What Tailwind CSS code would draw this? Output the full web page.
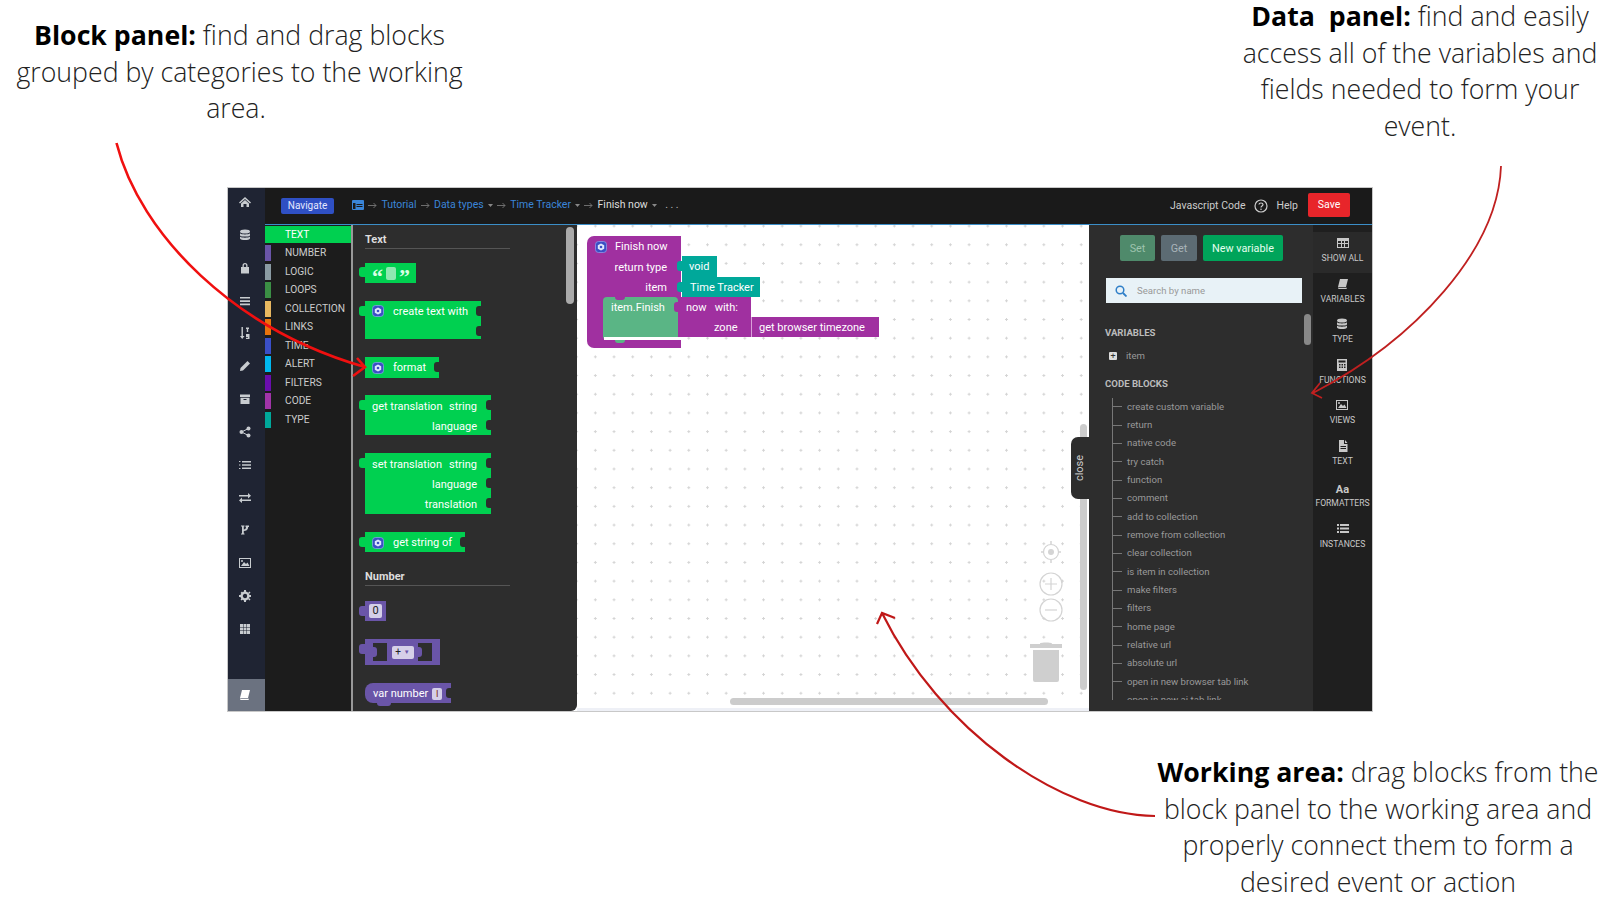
<!DOCTYPE html>
<html lang="en">
<head>
  <meta charset="UTF-8">
  <meta name="viewport" content="width=device-width, initial-scale=1.0">
  <title>Event editor overview</title>
  <script src="https://cdn.jsdelivr.net/npm/@tailwindcss/browser@4"></script>
</head>
<body class="bg-white">
  <svg class="hidden">
    <symbol id="gear" viewBox="0 0 12 12"><rect x=".5" y=".5" width="11" height="11" rx="3" fill="#3b4fc4" stroke="#8fa6f0" stroke-width=".7"/><path d="M6 2.400 9.200 4.200v3.600L6 9.600 2.800 7.800V4.200z" fill="#dfe8ff"/><circle cx="6" cy="6" r="1.300" fill="#3b4fc4"/></symbol>
    <symbol id="db" viewBox="0 0 12 12"><ellipse cx="6" cy="2.400" rx="5" ry="2" fill="currentColor"/><path d="M1 4.200c1 1.600 9 1.600 10 0v2.200c-1 1.600-9 1.600-10 0zM1 7.600c1 1.600 9 1.600 10 0v2c-1 2-9 2-10 0z" fill="currentColor"/></symbol>
    <symbol id="grid" viewBox="0 0 12 12"><path d="M0 1h12v10H0zM1 4v2h3V4zm4 0v2h2V4zm3 0v2h3V4zM1 7v3h3V7zm4 0v3h2V7zm3 0v3h3V7z" fill="currentColor" fill-rule="evenodd"/></symbol>
    <symbol id="book" viewBox="0 0 12 12"><path d="M3 1h8l-2 8H1zM1 9.500c0 1 .5 1.500 1.500 1.500H9.500l.5-1.200H2.500z" fill="currentColor"/></symbol>
    <symbol id="image" viewBox="0 0 12 12"><path d="M0 1h12v10H0zM1 2v8h10V2zm1 7 3-4 2 2 1.500-1.500L10.500 9z" fill="currentColor" fill-rule="evenodd"/><circle cx="3" cy="4" r="1" fill="currentColor"/></symbol>
    <symbol id="calc" viewBox="0 0 12 12"><path d="M1 0h10v12H1zM2.500 1.500v2h7v-2zM3 5v1.500h1.500V5zm2.500 0v1.500H7V5zM8 5v1.500h1.500V5zM3 7.500V9h1.500V7.500zm2.500 0V9H7V7.500zm2.500 0V9h1.500V7.500z" fill="currentColor" fill-rule="evenodd"/></symbol>
    <symbol id="file" viewBox="0 0 12 12"><path d="M2 0h5v4h3.500v8H2zM8 0l2.500 3H8zM3.500 6v1h5.500V6zm0 2v1h5.500V8z" fill="currentColor" fill-rule="evenodd"/></symbol>
    <symbol id="list" viewBox="0 0 12 12"><path d="M0 2h2v2H0zm3 0h9v2H3zM0 5.500h2v2H0zm3 0h9v2H3zM0 9h2v2H0zm3 0h9v2H3z" fill="currentColor"/></symbol>
    <symbol id="arrow" viewBox="0 0 9 7"><path d="M0 3.500h8M5.500 1 8 3.500 5.500 6" fill="none" stroke="#777" stroke-width=".9"/></symbol>
    <symbol id="caret" viewBox="0 0 5 3"><path d="M0 0h5L2.500 3z" fill="#888"/></symbol>
  </svg>

  <div class="relative w-[1600px] h-[900px] overflow-hidden bg-white font-['Open_Sans',sans-serif] font-light text-[26.700px] leading-[36.700px] text-[#222]">
    <div class="flex justify-between h-[188px]">
      <p class="w-[479px] pt-[17px] text-center"><b class="font-bold text-black">Block panel:</b> find and drag blocks<br>grouped by categories to the working<br>area.&nbsp;</p>
      <p class="w-[360px] -mt-[2px] text-center"><b class="font-bold text-black">Data&nbsp; panel:</b> find and easily<br>access all of the variables and<br>fields needed to form your<br>event.</p>
    </div>

    <div class="flex ml-[228px] w-[1144px] h-[523px] shadow-[0_0_0_1px_#c8c8c8] font-['Roboto',sans-serif] font-normal text-[11px] leading-[14px] text-[#ddd]">
      <!-- left rail -->
      <div class="flex flex-col items-center w-[37px] bg-[#1f2433] text-[#c8ccd0]">
        <div class="flex flex-col items-center gap-[20.850px] pt-[8px] pr-[3px]">
          <svg class="w-3 h-3" viewBox="0 0 12 12"><path d="M6 1 0 6.500l1 1L6 3l5 4.500 1-1zM2 7.500 6 4l4 3.500V11H7.500V8h-3v3H2z" fill="currentColor"/></svg>
          <svg class="w-3 h-3"><use href="#db"/></svg>
          <svg class="w-3 h-3" viewBox="0 0 12 12"><path d="M2 5h8v6.500H2zM3.500 5V3.500a2.500 2.500 0 0 1 5 0V5H7.200V3.500a1.200 1.200 0 0 0-2.400 0V5z" fill="currentColor"/></svg>
          <svg class="w-3 h-3" viewBox="0 0 12 12"><path d="M1 2h10v1.600H1zm0 3.300h10v1.600H1zm0 3.300h10v1.600H1z" fill="currentColor"/></svg>
          <svg class="w-3 h-3" viewBox="0 0 12 12"><path d="M2.500 0h1.400v9H5.500L3.200 12 1 9h1.500zM7 .5h3V2h-.8v3H7.800V2H7zM7 7h3.500v5H7v-1.200h2V10H7z" fill="currentColor"/></svg>
          <svg class="w-3 h-3" viewBox="0 0 12 12"><path d="M8.500 1 11 3.500 4 10.500 1 11l.5-3z" fill="currentColor"/></svg>
          <svg class="w-3 h-3" viewBox="0 0 12 12"><path d="M1 1.500h10v2.500H1zM1.500 4.800h9V11h-9zM4.500 6v1h3V6z" fill="currentColor" fill-rule="evenodd"/></svg>
          <svg class="w-3 h-3" viewBox="0 0 12 12"><circle cx="9.500" cy="2.500" r="2" fill="currentColor"/><circle cx="2.500" cy="6" r="2" fill="currentColor"/><circle cx="9.500" cy="9.500" r="2" fill="currentColor"/><path d="M9.500 2.500 2.500 6l7 3.500" fill="none" stroke="currentColor"/></svg>
          <svg class="w-3 h-3" viewBox="0 0 12 12"><path d="M0 2h1.500v1H0zm3 0h9v1.500H3zM0 5.500h1.500v1H0zm3-.2h9v1.500H3zM0 9h1.500v1H0zm3-.4h9v1.500H3z" fill="currentColor"/></svg>
          <svg class="w-3 h-3" viewBox="0 0 12 12"><path d="M0 3h9V1l3 2.800L9 6.500v-2H0zM12 7.500H3v-2L0 8.500 3 11V9h9z" fill="currentColor"/></svg>
          <svg class="w-3 h-3" viewBox="0 0 12 12"><path d="M2 1.500h3.500v1h-.7v3c1.200 0 2-.7 2.200-2.500h-.5v-1.500H10V3h-.8C9 6 7 7 4.800 7v2.500h.7v1H2v-1h1V2.500H2z" fill="currentColor"/></svg>
          <svg class="w-3 h-3"><use href="#image"/></svg>
          <svg class="w-3 h-3" viewBox="0 0 12 12"><circle cx="6" cy="6" r="3.400" fill="none" stroke="currentColor" stroke-width="2.400"/><path d="M5 0h2v2H5zm0 10h2v2H5zM0 5h2v2H0zm10 0h2v2h-2zM1.500 3 3 1.500 4 3 3 4zm7.500 6 1-1 1.500 1.500-1 1zM9 3l1.500-1.500 1 1L10 4zM1.500 9.500 3 8l1 1-1.500 1.500z" fill="currentColor"/></svg>
          <svg class="w-3 h-3" viewBox="0 0 12 12"><path d="M1 1h3v3H1zm3.500 0h3v3h-3zM8 1h3v3H8zM1 4.500h3v3H1zm3.500 0h3v3h-3zm3.500 0h3v3H8zM1 8h3v3H1zm3.500 0h3v3h-3zM8 8h3v3H8z" fill="currentColor"/></svg>
        </div>
        <div class="mt-auto flex items-center justify-center w-full h-[32px] pr-[3px] bg-[#6b7280] text-white">
          <svg class="w-3 h-3"><use href="#book"/></svg>
        </div>
      </div>

      <div class="flex flex-col w-[1107px]">
        <!-- top bar -->
        <div class="flex items-center h-[37px] pl-[16px] pr-[22px] bg-[#1a1a1a] border-b border-[#3b8ec8] text-[10.500px]">
          <span class="flex items-center justify-center w-[53px] h-[16px] rounded-[2px] bg-[#2f50c4] text-[#e4e8ff] text-[10px]">Navigate</span>
          <div class="flex items-center gap-[4.200px] ml-[18px] text-[#3a85d8] -mt-[2px]">
            <svg class="w-[12px] h-[10px]" viewBox="0 0 12 10"><path d="M0 1a1 1 0 0 1 1-1h10a1 1 0 0 1 1 1v8a1 1 0 0 1-1 1H1a1 1 0 0 1-1-1zM1 3v6h2.500V3zm3.500 1v1h6V4zm0 2v1h6V6z" fill="currentColor" fill-rule="evenodd"/></svg>
            <svg class="w-[9px] h-[7px]"><use href="#arrow"/></svg><span>Tutorial</span>
            <svg class="w-[9px] h-[7px]"><use href="#arrow"/></svg><span>Data types</span><svg class="w-[5px] h-[3px]"><use href="#caret"/></svg>
            <svg class="w-[9px] h-[7px]"><use href="#arrow"/></svg><span>Time Tracker</span><svg class="w-[5px] h-[3px]"><use href="#caret"/></svg>
            <svg class="w-[9px] h-[7px]"><use href="#arrow"/></svg><span class="text-[#ddd]">Finish now</span><svg class="w-[5px] h-[3px]"><use href="#caret"/></svg>
            <span class="ml-[4px] text-[#bbb] tracking-[2.500px]">...</span>
          </div>
          <div class="flex items-center ml-auto -mt-[1px] text-[#ccc]">
            <span>Javascript Code</span>
            <svg class="w-[14px] h-[14px] ml-[9px]" viewBox="0 0 14 14"><circle cx="7" cy="7" r="6" fill="none" stroke="currentColor" stroke-width="1.200"/><path d="M5 5.500C5 3.500 9 3.500 9 5.500 9 7 7 7 7 8.500" fill="none" stroke="currentColor" stroke-width="1.200"/><circle cx="7" cy="10.300" r=".8" fill="currentColor"/></svg>
            <span class="ml-[8px]">Help</span>
            <span class="flex items-center justify-center w-[42px] h-[24px] ml-[10px] -mt-[1px] rounded-[2px] bg-[#e8252a] text-white">Save</span>
          </div>
        </div>

        <div class="flex h-[486px]">
          <!-- categories -->
          <div class="w-[88px] pt-[1px] bg-[#1c1c1c] border-r-2 border-[#999] text-[10.200px] text-[#ccc]">
            <div class="flex items-center h-[17px] pt-[1px] pl-[20px] bg-[#00d050] text-white">TEXT</div>
            <div class="flex flex-col gap-[2.500px] pt-[2px]">
              <div class="flex items-center h-[16px]"><i class="w-[6px] h-full mr-[14px] bg-[#6a55a8]"></i>NUMBER</div>
              <div class="flex items-center h-[16px]"><i class="w-[6px] h-full mr-[14px] bg-[#8a9ba3]"></i>LOGIC</div>
              <div class="flex items-center h-[16px]"><i class="w-[6px] h-full mr-[14px] bg-[#3b8f45]"></i>LOOPS</div>
              <div class="flex items-center h-[16px]"><i class="w-[6px] h-full mr-[14px] bg-[#e8b860]"></i>COLLECTION</div>
              <div class="flex items-center h-[16px]"><i class="w-[6px] h-full mr-[14px] bg-[#e8720c]"></i>LINKS</div>
              <div class="flex items-center h-[16px]"><i class="w-[6px] h-full mr-[14px] bg-[#3a4fc8]"></i>TIME</div>
              <div class="flex items-center h-[16px]"><i class="w-[6px] h-full mr-[14px] bg-[#00b8f0]"></i>ALERT</div>
              <div class="flex items-center h-[16px]"><i class="w-[6px] h-full mr-[14px] bg-[#6a0dad]"></i>FILTERS</div>
              <div class="flex items-center h-[16px]"><i class="w-[6px] h-full mr-[14px] bg-[#a034a8]"></i>CODE</div>
              <div class="flex items-center h-[16px]"><i class="w-[6px] h-full mr-[14px] bg-[#00a89a]"></i>TYPE</div>
            </div>
          </div>

          <!-- block flyout -->
          <div class="relative w-[224px] pl-[12px] pt-[8px] overflow-hidden bg-[#2d2d2d] rounded-br-[6px] text-white">
            <div class="w-[145px] pb-[1px] border-b border-[#555] font-bold text-[#ddd]">Text</div>
            <div class="relative flex items-center w-[51px] h-[20px] mt-[14px] pl-[7px] gap-[3px] bg-[#00d050]">
              <i class="absolute -left-[6px] top-[4px] w-[6px] h-[10px] rounded-l-[3px] bg-[#00d050]"></i>
              <span class="h-[14px] font-bold text-[22px] leading-[22px] text-[#d8ffe6] font-['Liberation_Serif',serif]">“</span><i class="w-[10px] h-[13px] rounded-[2px] bg-[#8fe8b0]"></i><span class="h-[14px] font-bold text-[22px] leading-[22px] text-[#d8ffe6] font-['Liberation_Serif',serif]">”</span>
            </div>
            <div class="relative flex items-start w-[116px] h-[38px] mt-[18px] pl-[7px] pt-[4px] bg-[#00d050]">
              <i class="absolute -left-[6px] top-[5px] w-[6px] h-[10px] rounded-l-[3px] bg-[#00d050]"></i>
              <svg class="w-[12px] h-[12px] mr-[9px]"><use href="#gear"/></svg>create text with
              <i class="absolute right-0 top-[5px] w-[5px] h-[10px] rounded-l-[3px] bg-[#2d2d2d]"></i>
              <i class="absolute right-0 top-[25px] w-[5px] h-[10px] rounded-l-[3px] bg-[#2d2d2d]"></i>
            </div>
            <div class="relative flex items-center w-[74px] h-[21px] mt-[18px] pl-[7px] pt-[1px] bg-[#00d050]">
              <svg class="w-[12px] h-[12px] mr-[9px]"><use href="#gear"/></svg>format
              <i class="absolute right-0 top-[5px] w-[5px] h-[10px] rounded-l-[3px] bg-[#2d2d2d]"></i>
            </div>
            <div class="relative w-[126px] h-[40px] mt-[17px] pl-[7px] pr-[14px] pt-[5px] bg-[#00d050]">
              <i class="absolute -left-[6px] top-[5px] w-[6px] h-[10px] rounded-l-[3px] bg-[#00d050]"></i>
              <div class="flex justify-between"><span>get translation</span><span>string</span></div>
              <div class="mt-[6px] text-right">language</div>
              <i class="absolute right-0 top-[5px] w-[5px] h-[10px] rounded-l-[3px] bg-[#2d2d2d]"></i>
              <i class="absolute right-0 top-[25px] w-[5px] h-[10px] rounded-l-[3px] bg-[#2d2d2d]"></i>
            </div>
            <div class="relative w-[126px] h-[61px] mt-[18px] pl-[7px] pr-[14px] pt-[5px] bg-[#00d050]">
              <i class="absolute -left-[6px] top-[5px] w-[6px] h-[10px] rounded-l-[3px] bg-[#00d050]"></i>
              <div class="flex justify-between"><span>set translation</span><span>string</span></div>
              <div class="mt-[6px] text-right">language</div>
              <div class="mt-[6px] text-right">translation</div>
              <i class="absolute right-0 top-[5px] w-[5px] h-[10px] rounded-l-[3px] bg-[#2d2d2d]"></i>
              <i class="absolute right-0 top-[25px] w-[5px] h-[10px] rounded-l-[3px] bg-[#2d2d2d]"></i>
              <i class="absolute right-0 top-[45px] w-[5px] h-[10px] rounded-l-[3px] bg-[#2d2d2d]"></i>
            </div>
            <div class="relative flex items-center w-[100px] h-[20px] mt-[18px] pl-[7px] pt-[1px] bg-[#00d050]">
              <i class="absolute -left-[6px] top-[5px] w-[6px] h-[10px] rounded-l-[3px] bg-[#00d050]"></i>
              <svg class="w-[12px] h-[12px] mr-[9px]"><use href="#gear"/></svg>get string of
              <i class="absolute right-0 top-[5px] w-[5px] h-[10px] rounded-l-[3px] bg-[#2d2d2d]"></i>
            </div>
            <div class="w-[145px] mt-[18px] pb-[1px] border-b border-[#555] font-bold text-[#ddd]">Number</div>
            <div class="relative flex items-center justify-center w-[21px] h-[20px] mt-[15px] bg-[#6a55a8]">
              <i class="absolute -left-[6px] top-[5px] w-[6px] h-[10px] rounded-l-[3px] bg-[#6a55a8]"></i>
              <span class="flex items-center justify-center w-[13px] h-[14px] rounded-[2px] bg-[#d5cfe8] text-[#222]">0</span>
            </div>
            <div class="relative flex items-center justify-center w-[75px] h-[26px] mt-[18px] bg-[#6a55a8]">
              <i class="absolute -left-[6px] top-[5px] w-[6px] h-[10px] rounded-l-[3px] bg-[#6a55a8]"></i>
              <i class="absolute left-[8px] top-[4px] w-[14px] h-[18px] bg-[#2d2d2d]"></i>
              <i class="absolute left-[8px] top-[8px] w-[4px] h-[10px] rounded-r-[3px] bg-[#6a55a8]"></i>
              <i class="absolute right-[8px] top-[4px] w-[14px] h-[18px] bg-[#2d2d2d]"></i>
              <i class="absolute right-[18px] top-[8px] w-[4px] h-[10px] rounded-r-[3px] bg-[#6a55a8]"></i>
              <span class="relative flex items-center justify-center gap-[3px] w-[22px] h-[13px] rounded-[2px] bg-[#d5cfe8] text-[#222] text-[10px]">+<b class="text-[6px] text-[#6a55a8]">▼</b></span>
            </div>
            <div class="relative flex items-center w-[86px] h-[20px] mt-[18px] pl-[8px] pt-[2px] rounded-l-[8px] bg-[#6a55a8]">
              var number<span class="flex items-center justify-center w-[10px] h-[12px] ml-[4px] rounded-[2px] bg-[#d5cfe8] text-[#7a2d10] text-[9px]">I</span>
              <i class="absolute right-0 top-[5px] w-[5px] h-[10px] rounded-l-[3px] bg-[#2d2d2d]"></i>
              <i class="absolute left-[12px] -bottom-[3px] w-[14px] h-[3px] rounded-b-[3px] bg-[#6a55a8]"></i>
            </div>
            <div class="absolute right-[3px] top-[2px] w-[8px] h-[77px] rounded-full bg-[#aaa]"></div>
          </div>

          <!-- working area -->
          <div class="relative w-[513px] bg-white bg-[radial-gradient(circle,#d4d4d4_1px,transparent_1.200px)] bg-[size:18.700px_18.700px] bg-[position:9px_-8.300px] text-white text-[11px]">
            <div class="absolute left-[10px] top-[11px] w-[94px] h-[112px] rounded-l-[7px] bg-[#a030a0]">
              <div class="flex items-center h-[21px] pl-[8px] pt-[1px]"><svg class="w-[12px] h-[12px]"><use href="#gear"/></svg><span class="ml-[8px]">Finish now</span></div>
              <div class="h-[20px] pt-[1px] pr-[14px] text-right leading-[20px]">return type</div>
              <div class="h-[20px] pt-[1px] pr-[14px] text-right leading-[20px]">item</div>
              <div class="absolute left-[16px] top-[61px] w-[75px] h-[43px] rounded-[4px] bg-[#5ab585] pl-[8px] pt-[3px] leading-[16px]">item.Finish<i class="absolute left-[12px] top-0 w-[10px] h-[3px] rounded-b-[4px] bg-[#a030a0]"></i><i class="absolute left-[12px] -bottom-[3px] w-[10px] h-[3px] rounded-b-[4px] bg-[#5ab585] z-10"></i></div>
              <div class="absolute left-[17px] bottom-[8px] w-[77px] h-[3px] bg-white"></div>
            </div>
            <div class="absolute left-[105px] top-[31px] flex items-center w-[35px] h-[21px] pl-[7px] bg-[#00a89a]">void<i class="absolute -left-[5px] top-[5px] w-[5px] h-[10px] rounded-l-[3px] bg-[#00a89a]"></i></div>
            <div class="absolute left-[105px] top-[52px] flex items-center w-[78px] h-[20px] pt-[1px] pl-[8px] bg-[#00a89a]">Time Tracker<i class="absolute -left-[5px] top-[5px] w-[5px] h-[10px] rounded-l-[3px] bg-[#00a89a]"></i></div>
            <div class="absolute left-[101px] top-[72px] w-[73px] h-[40px] pl-[8px] pt-[1px] bg-[#a030a0] leading-[20px]">
              <i class="absolute -left-[4px] top-[5px] w-[4px] h-[10px] rounded-l-[3px] bg-[#a030a0]"></i>
              <div class="flex gap-[8px]"><span>now</span><span>with:</span></div>
              <div class="pl-[28px]">zone</div>
            </div>
            <div class="absolute left-[174px] top-[92px] flex items-center w-[128px] h-[20px] pt-[1px] pl-[8px] bg-[#a030a0] shadow-[inset_1px_0_0_#d9a0d9]">get browser timezone</div>

            <svg class="absolute left-[464px] top-[316px] w-[20px] h-[22px] text-[#d4d4d4]" viewBox="0 0 20 22"><circle cx="10" cy="11" r="7.500" fill="none" stroke="currentColor" stroke-width="1.200"/><circle cx="10" cy="11" r="3" fill="currentColor"/><path d="M10 0v3M10 19v3M0 11h3M17 11h3" stroke="currentColor" stroke-width="1.500"/></svg>
            <svg class="absolute left-[462px] top-[347px] w-[24px] h-[24px] text-[#d4d4d4]" viewBox="0 0 24 24"><circle cx="12" cy="12" r="11" fill="none" stroke="currentColor" stroke-width="1.200"/><path d="M12 6v12M6 12h12" stroke="currentColor" stroke-width="1.200"/></svg>
            <svg class="absolute left-[462px] top-[373px] w-[24px] h-[24px] text-[#d4d4d4]" viewBox="0 0 24 24"><circle cx="12" cy="12" r="11" fill="none" stroke="currentColor" stroke-width="1.200"/><path d="M6 12h12" stroke="currentColor" stroke-width="1.200"/></svg>
            <svg class="absolute left-[453px] top-[416px] w-[32px] h-[41px] text-[#cfcfcf]" viewBox="0 0 32 41"><path d="M10 2.500C10 1 22 1 22 2.500V3h10v4H0V3h10zM3 9h26v30a2 2 0 0 1-2 2H5a2 2 0 0 1-2-2z" fill="currentColor"/></svg>

            <div class="absolute left-[503px] top-[199px] w-[7px] h-[266px] rounded-full bg-[#ccc]"></div>
            <div class="absolute left-[153px] top-[473px] w-[318px] h-[7px] rounded-full bg-[#ccc]"></div>
            <div class="absolute left-0 bottom-0 w-full h-[3px] bg-[#eef0f6]"></div>
            <div class="absolute right-0 top-[212px] flex items-center justify-center w-[19px] h-[62px] rounded-l-[7px] bg-[#2d2d2d] text-[11px] text-[#ccc]"><span class="-rotate-90">close</span></div>
          </div>

          <!-- data panel -->
          <div class="relative w-[224px] -ml-[1px] bg-[#2d2d2d] text-[9.600px] text-[#999] overflow-hidden">
            <div class="flex gap-[6px] pl-[31px] pt-[10px] text-[10.800px]">
              <span class="flex items-center justify-center w-[35px] h-[26px] pt-[1px] rounded-[2px] bg-[#4f8a6b] text-[#9ec4ae]">Set</span>
              <span class="flex items-center justify-center w-[36px] h-[26px] pt-[1px] rounded-[2px] bg-[#5c6b73] text-[#a9b4ba]">Get</span>
              <span class="flex items-center justify-center w-[80px] h-[26px] pt-[1px] rounded-[2px] bg-[#00a45a] text-[#e6fff0]">New variable</span>
            </div>
            <div class="flex items-center w-[196px] h-[25px] ml-[17px] mt-[17px] pl-[9px] pt-[1px] bg-[#e8f2f7] text-[#999]">
              <svg class="w-[12px] h-[12px] mr-[10px] text-[#2f7fc8]" viewBox="0 0 12 12"><circle cx="5" cy="5" r="3.800" fill="none" stroke="currentColor" stroke-width="1.500"/><path d="m8 8 3.500 3.500" stroke="currentColor" stroke-width="1.800"/></svg>
              Search by name
            </div>
            <div class="mt-[23px] pl-[16px] font-bold text-[#bbb] leading-[14px]">VARIABLES</div>
            <div class="flex items-center mt-[9px] pl-[20px]"><span class="flex items-center justify-center w-[8px] h-[8px] mr-[9px] rounded-[1px] bg-[#ddd] text-[#333] text-[9px] leading-none">+</span>item</div>
            <div class="mt-[14px] pl-[16px] font-bold text-[#bbb] leading-[14px]">CODE BLOCKS</div>
            <div class="relative ml-[23px] mt-[6.500px] h-[302px] overflow-hidden border-l border-[#777]">
              <div class="flex flex-col">
                <div class="flex items-center h-[18.350px]"><i class="w-[9px] h-px mr-[5px] bg-[#777]"></i>create custom variable</div>
                <div class="flex items-center h-[18.350px]"><i class="w-[9px] h-px mr-[5px] bg-[#777]"></i>return</div>
                <div class="flex items-center h-[18.350px]"><i class="w-[9px] h-px mr-[5px] bg-[#777]"></i>native code</div>
                <div class="flex items-center h-[18.350px]"><i class="w-[9px] h-px mr-[5px] bg-[#777]"></i>try catch</div>
                <div class="flex items-center h-[18.350px]"><i class="w-[9px] h-px mr-[5px] bg-[#777]"></i>function</div>
                <div class="flex items-center h-[18.350px]"><i class="w-[9px] h-px mr-[5px] bg-[#777]"></i>comment</div>
                <div class="flex items-center h-[18.350px]"><i class="w-[9px] h-px mr-[5px] bg-[#777]"></i>add to collection</div>
                <div class="flex items-center h-[18.350px]"><i class="w-[9px] h-px mr-[5px] bg-[#777]"></i>remove from collection</div>
                <div class="flex items-center h-[18.350px]"><i class="w-[9px] h-px mr-[5px] bg-[#777]"></i>clear collection</div>
                <div class="flex items-center h-[18.350px]"><i class="w-[9px] h-px mr-[5px] bg-[#777]"></i>is item in collection</div>
                <div class="flex items-center h-[18.350px]"><i class="w-[9px] h-px mr-[5px] bg-[#777]"></i>make filters</div>
                <div class="flex items-center h-[18.350px]"><i class="w-[9px] h-px mr-[5px] bg-[#777]"></i>filters</div>
                <div class="flex items-center h-[18.350px]"><i class="w-[9px] h-px mr-[5px] bg-[#777]"></i>home page</div>
                <div class="flex items-center h-[18.350px]"><i class="w-[9px] h-px mr-[5px] bg-[#777]"></i>relative url</div>
                <div class="flex items-center h-[18.350px]"><i class="w-[9px] h-px mr-[5px] bg-[#777]"></i>absolute url</div>
                <div class="flex items-center h-[18.350px]"><i class="w-[9px] h-px mr-[5px] bg-[#777]"></i>open in new browser tab link</div>
                <div class="flex items-center h-[18.350px]"><i class="w-[9px] h-px mr-[5px] bg-[#777]"></i>open in new ai tab link</div>
              </div>
            </div>
            <div class="absolute right-[2px] top-[89px] w-[7px] h-[31px] rounded-full bg-[#888]"></div>
          </div>

          <!-- right rail -->
          <div class="flex flex-col items-center w-[59px] pt-[7px] bg-[#1f1f1f] text-[8.600px] leading-[11px] text-[#c8c8c8]">
            <div class="flex flex-col items-center w-full h-[41px] pt-[5px] gap-[4px] bg-[#2a2a2a]"><svg class="w-[12px] h-[12px]"><use href="#grid"/></svg>SHOW ALL</div>
            <div class="flex flex-col items-center h-[40px] pt-[5px] gap-[4px]"><svg class="w-[12px] h-[12px]"><use href="#book"/></svg>VARIABLES</div>
            <div class="flex flex-col items-center h-[41px] pt-[5px] gap-[4px]"><svg class="w-[12px] h-[12px]"><use href="#db"/></svg>TYPE</div>
            <div class="flex flex-col items-center h-[40px] pt-[5px] gap-[4px]"><svg class="w-[12px] h-[12px]"><use href="#calc"/></svg>FUNCTIONS</div>
            <div class="flex flex-col items-center h-[41px] pt-[5px] gap-[4px]"><svg class="w-[12px] h-[12px]"><use href="#image"/></svg>VIEWS</div>
            <div class="flex flex-col items-center h-[42px] pt-[5px] gap-[4px]"><svg class="w-[12px] h-[12px]"><use href="#file"/></svg>TEXT</div>
            <div class="flex flex-col items-center h-[39px] pt-[6px] gap-[2px]"><b class="text-[11px] leading-[13px]">Aa</b>FORMATTERS</div>
            <div class="flex flex-col items-center pt-[6px] gap-[5px]"><svg class="w-[12px] h-[12px]"><use href="#list"/></svg>INSTANCES</div>
          </div>
        </div>
      </div>
    </div>

    <div class="flex justify-end pt-[43px]">
      <p class="w-[444px] text-center"><b class="font-bold text-black">Working area:</b> drag blocks from the<br>block panel to the working area and<br>properly connect them to form a<br>desired event or action</p>
    </div>

    <!-- callout arrows -->
    <svg class="absolute inset-0 pointer-events-none" width="1600" height="900" fill="none">
      <path d="M116.500 143C140 235 235 330 365 367M357 358 365 367 353 376" stroke="#f01010" stroke-width="2.600"/>
      <path d="M1501 166C1498 250 1415 340 1313 393M1320 383 1312 393 1322 398" stroke="#c02020" stroke-width="1.800"/>
      <path d="M1155 816C1060 815 940 730 882 613M877 624 882 613 895 618" stroke="#c01818" stroke-width="2.200"/>
    </svg>
  </div>
</body>
</html>
